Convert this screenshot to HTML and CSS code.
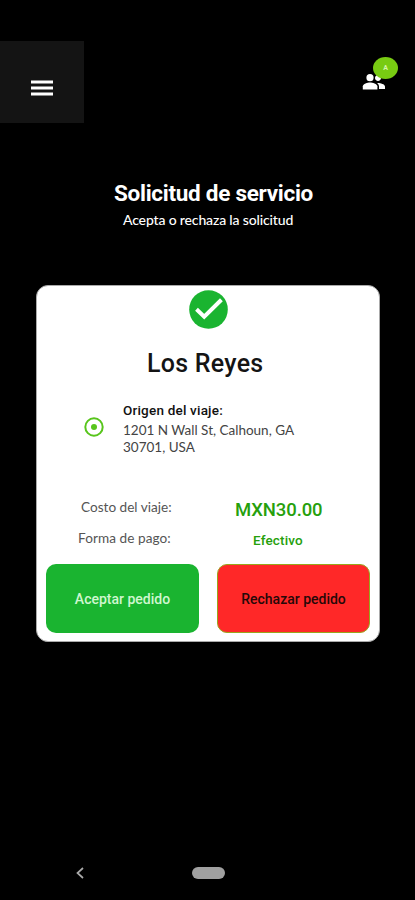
FILE: index.html
```html
<!DOCTYPE html>
<html lang="es">
<head>
<meta charset="utf-8">
<title>Solicitud de servicio</title>
<link rel="stylesheet" href="styles.css">
</head>
<body>
<div class="screen">
  <header class="topbar">
    <button class="menu" aria-label="Menú"><svg width="22" height="16" viewBox="0 0 22 16"><path d="M0 .4h22v3.1H0zM0 6.4h22v3.1H0zM0 12.4h22v3.1H0z"/></svg></button>
    <div class="people">
      <svg width="24" height="24" viewBox="0 0 24 24"><path d="M16 11c1.66 0 2.99-1.34 2.99-3S17.66 5 16 5s-3 1.34-3 3 1.34 3 3 3zm0 2c-.29 0-.62.02-.97.05 1.16.84 1.97 1.97 1.97 3.45V19h6v-2.5c0-2.33-4.67-3.5-7-3.5z"/><circle cx="8" cy="7.7" r="3.6"/><path d="M8 12.4c-2.33 0-7.2 1.17-7.2 3.9v3.1h14.6v-3.1c0-2.73-5.07-3.9-7.4-3.9z"/></svg>
      <span class="badge">A</span>
    </div>
  </header>
  <section class="intro">
    <h1>Solicitud de servicio</h1>
    <p>Acepta o rechaza la solicitud</p>
  </section>
  <main class="card">
    <svg class="check" width="39" height="39" viewBox="0 0 39 39"><circle cx="19.5" cy="19.5" r="19.3"/><path d="M7.5 19.3l7.7 7.3L32.4 9.8"/></svg>
    <h2>Los Reyes</h2>
    <div class="trip">
      <svg class="pin" width="20" height="20" viewBox="0 0 20 20"><circle cx="10" cy="10" r="8.7"/><circle class="dot" cx="10" cy="10" r="3"/></svg>
      <div class="origin">
        <h3>Origen del viaje:</h3>
        <p>1201 N Wall St, Calhoun, GA<br>30701, USA</p>
      </div>
    </div>
    <dl class="details">
      <dt>Costo del viaje:</dt><dd class="price">MXN30.00</dd>
      <dt class="pay">Forma de pago:</dt><dd class="method">Efectivo</dd>
    </dl>
    <div class="actions">
      <button class="accept"><span>Aceptar pedido</span></button>
      <button class="reject"><span>Rechazar pedido</span></button>
    </div>
  </main>
  <nav class="sysnav">
    <svg width="8" height="12" viewBox="0 0 8 12"><path d="M7 1L1.5 6 7 11"/></svg>
    <span class="home"></span>
  </nav>
</div>
</body>
</html>
```
FILE: styles.css
```css
* { box-sizing: border-box; margin: 0; padding: 0; }
body { background: #000; font-family: Roboto, "Liberation Sans", sans-serif; }
.screen { width: 415px; height: 900px; padding-top: 41px; display: flex; flex-direction: column; overflow: hidden; background: #000; }
button { border: 0; font: inherit; }
.topbar { display: flex; justify-content: space-between; height: 82px; padding-right: 17px; }
.menu { width: 84px; height: 82px; padding-top: 11px; background: #141414; display: flex; align-items: center; justify-content: center; }
.menu svg { fill: #fff; }
.people { position: relative; width: 36px; height: 50px; padding-top: 29px; }
.people svg { fill: #fff; display: block; }
.badge { position: absolute; left: 11px; top: 16px; width: 25px; height: 22px; border-radius: 50%; background: #78cb12; color: #d5f5ac; font-size: 7px; font-weight: 700; line-height: 22px; text-align: center; }
.intro { height: 162px; padding-top: 56px; color: #fff; white-space: nowrap; }
h1 { margin-left: 114px; font-size: 22.5px; font-weight: 700; line-height: 28px; letter-spacing: -.28px; }
.intro p { margin: 3px 0 0 123px; font: 500 14px/20px Lato, sans-serif; letter-spacing: -.15px; }
.card { margin-left: 36px; width: 344px; height: 357px; padding: 5px 9px 0; background: #fff; border: 1px solid #aaa; border-radius: 12px; display: flex; flex-direction: column; }
.check { align-self: center; fill: #1ab430; margin-top: -1px; }
.check path { fill: none; stroke: #fff; stroke-width: 4; }
h2 { margin-top: 18px; height: 34px; padding-left: 101px; font-size: 25px; line-height: 34px; font-weight: 500; letter-spacing: .26px; color: #141414; }
.trip { display: flex; margin-top: 19px; padding-left: 37px; height: 58px; white-space: nowrap; }
.pin { margin: 17px 19px 0 1px; fill: none; stroke: #58c51c; stroke-width: 2; flex: none; }
.pin .dot { fill: #58c51c; stroke: none; }
h3 { font-size: 13.5px; line-height: 20px; font-weight: 500; letter-spacing: .2px; color: #111; }
.origin p { font: 400 13.5px/17px Lato, sans-serif; color: #444; margin-top: 2px; }
.details { display: grid; grid-template-columns: 154px 1fr; grid-template-rows: 31px 31px; margin-top: 34px; line-height: 31px; white-space: nowrap; }
dt { padding-left: 35px; font-family: Lato, sans-serif; font-size: 13.6px; color: #555; }
.pay { padding-left: 32px; letter-spacing: .06px; }
dd { color: #26a00c; font-weight: 500; }
.price { padding-left: 35px; font-size: 18.5px; line-height: 36px; letter-spacing: -.1px; }
.method { padding-left: 53px; font-size: 13.5px; line-height: 34px; letter-spacing: .15px; }
.actions { display: flex; gap: 18px; margin-top: 10px; }
.actions button { width: 153px; height: 69px; border-radius: 10px; font-size: 14px; font-weight: 500; white-space: nowrap; }
.accept { background: #1ab430; color: #cff7cf; }
.reject { background: #ff2828; color: #260808; border: 1px solid #9aa51c; }
.sysnav { margin-top: auto; height: 54px; padding-left: 76px; display: flex; align-items: center; gap: 108px; }
.sysnav svg { fill: none; stroke: #aaa; stroke-width: 1.7; }
.home { width: 33px; height: 12px; border-radius: 6px; background: #a0a0a0; }
```
